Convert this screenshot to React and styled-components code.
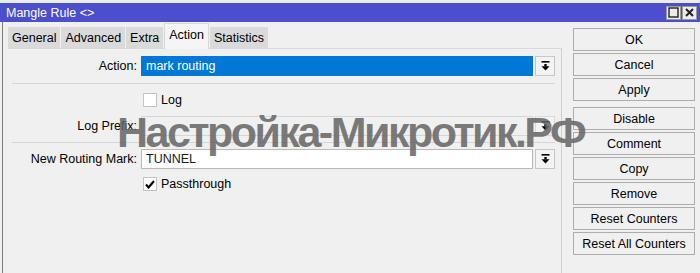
import styled, { createGlobalStyle } from "styled-components";

const GlobalStyle = createGlobalStyle`
  html, body {
    margin: 0;
    padding: 0;
    background: #f0f0f0;
  }
  body {
    font-family: "Liberation Sans", Arial, sans-serif;
    font-size: 12.5px;
    color: #000;
  }
`;

const ACTION_BUTTONS = ["OK", "Cancel", "Apply"];
const RULE_BUTTONS = ["Disable", "Comment", "Copy", "Remove", "Reset Counters", "Reset All Counters"];
const TABS = ["General", "Advanced", "Extra", "Action", "Statistics"];

function DropArrow() {
  return (
    <svg width="9" height="10" viewBox="0 0 9 10">
      <rect x="0.5" y="0" width="8" height="1.6" fill="#000" />
      <rect x="3.3" y="3" width="2.4" height="2.5" fill="#000" />
      <polygon points="0.5,5.2 8.5,5.2 4.5,9.6" fill="#000" />
    </svg>
  );
}

function Check() {
  return (
    <svg width="10" height="9" viewBox="0 0 10 9">
      <path d="M1 4.6 L3.6 7.4 L9 1" stroke="#000" strokeWidth="2.2" fill="none" />
    </svg>
  );
}

export default function App() {
  return (
    <Window>
      <GlobalStyle />
      <TopStrip />
      <TitleBar>
        <span>Mangle Rule &lt;&gt;</span>
        <TitleButtons>
          <TitleButton>
            <svg width="11" height="11" viewBox="0 0 11 11">
              <rect x="1" y="1" width="9" height="9" stroke="#222" strokeWidth="1.4" fill="none" />
            </svg>
          </TitleButton>
          <TitleButton>
            <svg width="11" height="11" viewBox="0 0 11 11">
              <path d="M2 2 L9 9 M9 2 L2 9" stroke="#222" strokeWidth="2" />
            </svg>
          </TitleButton>
        </TitleButtons>
      </TitleBar>

      <Body>
        <Main>
          <TabRow>
            {TABS.map((t) => (
              <Tab key={t} $selected={t === "Action"}>
                {t}
              </Tab>
            ))}
          </TabRow>

          <Panel>
            <Row>
              <Label>Action:</Label>
              <FieldGroup>
                <Field $variant="selected">mark routing</Field>
                <DropButton>
                  <DropArrow />
                </DropButton>
              </FieldGroup>
            </Row>

            <Separator $top={7} />

            <CheckRow $top={8}>
              <CheckBox />
              <span>Log</span>
            </CheckRow>

            <Row $top={8}>
              <Label>Log Prefix:</Label>
              <FieldGroup>
                <Field $variant="disabled" />
                <DropButton $disabled>
                  <DropArrow />
                </DropButton>
              </FieldGroup>
            </Row>

            <Separator $top={6} />

            <Row $top={6}>
              <Label>New Routing Mark:</Label>
              <FieldGroup>
                <Field>TUNNEL</Field>
                <DropButton>
                  <DropArrow />
                </DropButton>
              </FieldGroup>
            </Row>

            <CheckRow $top={7}>
              <CheckBox>
                <Check />
              </CheckBox>
              <span>Passthrough</span>
            </CheckRow>

            <Watermark>Настройка-Микротик.РФ</Watermark>
          </Panel>
        </Main>

        <Sidebar>
          <ButtonGroup>
            {ACTION_BUTTONS.map((b) => (
              <SideButton key={b}>{b}</SideButton>
            ))}
          </ButtonGroup>
          <ButtonGroup>
            {RULE_BUTTONS.map((b) => (
              <SideButton key={b}>{b}</SideButton>
            ))}
          </ButtonGroup>
        </Sidebar>
      </Body>
    </Window>
  );
}

const Window = styled.div`
  width: 700px;
  height: 273px;
  overflow: hidden;
  display: flex;
  flex-direction: column;
  background: #f0f0f0;
`;

const TopStrip = styled.div`
  height: 3px;
  background: #ececec;
`;

const TitleBar = styled.div`
  height: 19px;
  background: #4b4ecd;
  color: #fff;
  display: flex;
  align-items: center;
  justify-content: space-between;
  padding: 0 3px 0 6px;
  font-size: 12.5px;
`;

const TitleButtons = styled.div`
  display: flex;
  gap: 1px;
`;

const TitleButton = styled.div`
  width: 15px;
  height: 14px;
  background: #ececec;
  border: 1px solid #9a9a9a;
  box-sizing: border-box;
  display: flex;
  align-items: center;
  justify-content: center;
`;

const Body = styled.div`
  flex: 1;
  display: flex;
  margin-left: 2px;
  border-left: 1px solid #7a7a7a;
`;

const Main = styled.div`
  width: 559px;
  box-sizing: border-box;
  display: flex;
  flex-direction: column;
  padding-left: 5px;
`;

const TabRow = styled.div`
  height: 26px;
  display: flex;
  align-items: flex-end;
  gap: 1px;
  position: relative;
  z-index: 1;
`;

const Tab = styled.div`
  height: ${(p) => (p.$selected ? "26px" : "21px")};
  margin-bottom: ${(p) => (p.$selected ? "-1px" : "0")};
  padding: ${(p) => (p.$selected ? "0 4px 4px" : "0 4px")};
  box-sizing: border-box;
  display: flex;
  align-items: center;
  background: ${(p) => (p.$selected ? "#f5f5f5" : "#dadada")};
  border: ${(p) => (p.$selected ? "1px solid #d9d9d9" : "0")};
  border-bottom: 0;
  font-size: 12.5px;
`;

const Panel = styled.div`
  flex: 1;
  position: relative;
  border-top: 1px solid #d9d9d9;
  border-right: 1px solid #cfcfcf;
  padding: 7px 6px 0 4px;
  display: flex;
  flex-direction: column;
`;

const Row = styled.div`
  display: grid;
  grid-template-columns: 125px 1fr;
  column-gap: 4px;
  align-items: center;
  height: 20px;
  margin-top: ${(p) => p.$top || 0}px;
`;

const Label = styled.div`
  text-align: right;
  white-space: nowrap;
`;

const FieldGroup = styled.div`
  display: flex;
  gap: 2px;
  height: 20px;
`;

const Field = styled.div`
  flex: 1;
  box-sizing: border-box;
  padding: 0 4px;
  display: flex;
  align-items: center;
  background: ${(p) =>
    p.$variant === "selected" ? "#0078d7" : p.$variant === "disabled" ? "#f0f0f0" : "#fff"};
  color: ${(p) => (p.$variant === "selected" ? "#fff" : "#1a1a1a")};
  border: 1px solid
    ${(p) => (p.$variant === "selected" ? "#0078d7" : p.$variant === "disabled" ? "#d6d6d6" : "#b9b9b9")};
`;

const DropButton = styled.div`
  width: 20px;
  box-sizing: border-box;
  display: flex;
  align-items: center;
  justify-content: center;
  background: #f3f3f3;
  border: 1px solid ${(p) => (p.$disabled ? "#dadada" : "#c6c6c6")};
`;

const Separator = styled.div`
  height: 1px;
  background: #d6d6d6;
  margin-top: ${(p) => p.$top || 0}px;
`;

const CheckRow = styled.div`
  display: flex;
  align-items: center;
  gap: 4px;
  height: 16px;
  padding-left: 131px;
  margin-top: ${(p) => p.$top || 0}px;
`;

const CheckBox = styled.div`
  width: 14px;
  height: 14px;
  box-sizing: border-box;
  background: #fff;
  border: 1px solid #c4c4c4;
  display: flex;
  align-items: center;
  justify-content: center;
`;

const Watermark = styled.div`
  position: absolute;
  left: 109px;
  top: 59px;
  font-family: "Liberation Sans", Arial, sans-serif;
  font-weight: bold;
  font-size: 43px;
  letter-spacing: -2.5px;
  color: rgba(100, 100, 100, 0.85);
  white-space: nowrap;
  pointer-events: none;
`;

const Sidebar = styled.div`
  flex: 1;
  display: flex;
  flex-direction: column;
  gap: 6px;
  padding: 6px 0 0 11px;
`;

const ButtonGroup = styled.div`
  display: flex;
  flex-direction: column;
  gap: 2px;
`;

const SideButton = styled.div`
  width: 122px;
  height: 23px;
  box-sizing: border-box;
  display: flex;
  align-items: center;
  justify-content: center;
  background: #f0f0f0;
  border: 1px solid #adadad;
  white-space: nowrap;
`;
